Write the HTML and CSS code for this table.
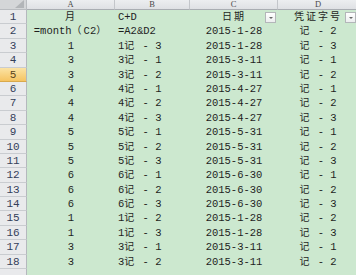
FILE: index.html
```html
<!DOCTYPE html>
<html>
<head>
<meta charset="utf-8">
<link rel="stylesheet" href="styles.css">
</head>
<body>
<div class="sheet">
  <div class="corner"><span class="tri"></span></div>
  <div class="colh">A</div>
  <div class="colh">B</div>
  <div class="colh">C</div>
  <div class="colh last">D</div>

  <div class="rowh">1</div>
  <div class="cell c"><span class="cj">月</span></div>
  <div class="cell l">C+D</div>
  <div class="cell c flt"><span class="cj">日期</span><span class="fbtn"></span></div>
  <div class="cell c flt"><span class="cj">凭证字号</span><span class="fbtn"></span></div>

  <div class="rowh">2</div>
  <div class="cell c">=month<span class="cj">（</span>C2<span class="cj">）</span></div>
  <div class="cell l">=A2&amp;D2</div>
  <div class="cell c">2015-1-28</div>
  <div class="cell c"><span class="cj">记</span> - 2</div>

  <div class="rowh">3</div>
  <div class="cell c">1</div>
  <div class="cell l">1<span class="cj">记</span> - 3</div>
  <div class="cell c">2015-1-28</div>
  <div class="cell c"><span class="cj">记</span> - 3</div>

  <div class="rowh">4</div>
  <div class="cell c">3</div>
  <div class="cell l">3<span class="cj">记</span> - 1</div>
  <div class="cell c">2015-3-11</div>
  <div class="cell c"><span class="cj">记</span> - 1</div>

  <div class="rowh sel">5</div>
  <div class="cell c">3</div>
  <div class="cell l">3<span class="cj">记</span> - 2</div>
  <div class="cell c">2015-3-11</div>
  <div class="cell c"><span class="cj">记</span> - 2</div>

  <div class="rowh">6</div>
  <div class="cell c">4</div>
  <div class="cell l">4<span class="cj">记</span> - 1</div>
  <div class="cell c">2015-4-27</div>
  <div class="cell c"><span class="cj">记</span> - 1</div>

  <div class="rowh">7</div>
  <div class="cell c">4</div>
  <div class="cell l">4<span class="cj">记</span> - 2</div>
  <div class="cell c">2015-4-27</div>
  <div class="cell c"><span class="cj">记</span> - 2</div>

  <div class="rowh">8</div>
  <div class="cell c">4</div>
  <div class="cell l">4<span class="cj">记</span> - 3</div>
  <div class="cell c">2015-4-27</div>
  <div class="cell c"><span class="cj">记</span> - 3</div>

  <div class="rowh">9</div>
  <div class="cell c">5</div>
  <div class="cell l">5<span class="cj">记</span> - 1</div>
  <div class="cell c">2015-5-31</div>
  <div class="cell c"><span class="cj">记</span> - 1</div>

  <div class="rowh">10</div>
  <div class="cell c">5</div>
  <div class="cell l">5<span class="cj">记</span> - 2</div>
  <div class="cell c">2015-5-31</div>
  <div class="cell c"><span class="cj">记</span> - 2</div>

  <div class="rowh">11</div>
  <div class="cell c">5</div>
  <div class="cell l">5<span class="cj">记</span> - 3</div>
  <div class="cell c">2015-5-31</div>
  <div class="cell c"><span class="cj">记</span> - 3</div>

  <div class="rowh">12</div>
  <div class="cell c">6</div>
  <div class="cell l">6<span class="cj">记</span> - 1</div>
  <div class="cell c">2015-6-30</div>
  <div class="cell c"><span class="cj">记</span> - 1</div>

  <div class="rowh">13</div>
  <div class="cell c">6</div>
  <div class="cell l">6<span class="cj">记</span> - 2</div>
  <div class="cell c">2015-6-30</div>
  <div class="cell c"><span class="cj">记</span> - 2</div>

  <div class="rowh">14</div>
  <div class="cell c">6</div>
  <div class="cell l">6<span class="cj">记</span> - 3</div>
  <div class="cell c">2015-6-30</div>
  <div class="cell c"><span class="cj">记</span> - 3</div>

  <div class="rowh">15</div>
  <div class="cell c">1</div>
  <div class="cell l">1<span class="cj">记</span> - 2</div>
  <div class="cell c">2015-1-28</div>
  <div class="cell c"><span class="cj">记</span> - 2</div>

  <div class="rowh">16</div>
  <div class="cell c">1</div>
  <div class="cell l">1<span class="cj">记</span> - 3</div>
  <div class="cell c">2015-1-28</div>
  <div class="cell c"><span class="cj">记</span> - 3</div>

  <div class="rowh">17</div>
  <div class="cell c">3</div>
  <div class="cell l">3<span class="cj">记</span> - 1</div>
  <div class="cell c">2015-3-11</div>
  <div class="cell c"><span class="cj">记</span> - 1</div>

  <div class="rowh">18</div>
  <div class="cell c">3</div>
  <div class="cell l">3<span class="cj">记</span> - 2</div>
  <div class="cell c">2015-3-11</div>
  <div class="cell c"><span class="cj">记</span> - 2</div>

  <div class="rowh"></div>
  <div class="cell"></div>
  <div class="cell"></div>
  <div class="cell"></div>
  <div class="cell"></div>
</div>
</body>
</html>
```

FILE: styles.css
```css
html, body {
  margin: 0;
  padding: 0;
  background: #cce8cf;
  overflow: hidden;
}

.sheet {
  display: grid;
  grid-template-columns: 27px 88px 75px 88px 80px;
  grid-template-rows: 10px repeat(19, 14.4px);
  width: 358px;
  font-family: "Liberation Mono", "Noto Sans CJK SC", monospace;
  font-size: 10.5px;
  color: #1e1e1e;
}

.corner {
  background: #d4d6d8;
  border-right: 1px solid #b9bcc0;
  border-bottom: 1px solid #b9bcc0;
  box-sizing: border-box;
  position: relative;
}

.corner .tri {
  position: absolute;
  right: 2px;
  bottom: 1px;
  width: 9px;
  height: 8px;
  background: #b2b5b8;
  clip-path: polygon(100% 0, 100% 100%, 0 100%);
}

.colh {
  background: linear-gradient(#eceef0, #dfe1e4);
  border-right: 1px solid #c3c6ca;
  border-bottom: 1px solid #a9adb2;
  box-sizing: border-box;
  font-family: "Liberation Serif", "DejaVu Serif", serif;
  font-size: 8.5px;
  line-height: 9px;
  color: #4a4a4a;
  text-align: center;
}

.colh.last {
  border-right: none;
}

.rowh {
  background: #e9eaec;
  border-right: 1px solid #b4b8bd;
  border-bottom: 1px solid #c9ccd0;
  box-sizing: border-box;
  text-align: center;
  font-family: "Liberation Mono", monospace;
  font-size: 11px;
  line-height: 14px;
  color: #34405a;
}

.rowh.sel {
  background: linear-gradient(#fbe3a4, #f5c462);
  border-bottom-color: #d9a94b;
  color: #5a4520;
}

.cell {
  background: #cce8cf;
  line-height: 14.4px;
  white-space: nowrap;
  position: relative;
}

.cell.c {
  text-align: center;
}

.cell.l {
  text-align: left;
  padding-left: 3px;
}

.cj {
  font-family: "Noto Sans CJK SC", sans-serif;
  font-size: 10px;
  letter-spacing: 2px;
  line-height: 10px;
}

.fbtn {
  position: absolute;
  right: 2px;
  top: 2px;
  width: 11px;
  height: 11px;
  box-sizing: border-box;
  border: 1px solid #b3b6b9;
  background: linear-gradient(#ffffff, #eceeef);
}

.fbtn::after {
  content: "";
  position: absolute;
  left: 3px;
  top: 4px;
  border-left: 2px solid transparent;
  border-right: 2px solid transparent;
  border-top: 2px solid #666;
}
```
